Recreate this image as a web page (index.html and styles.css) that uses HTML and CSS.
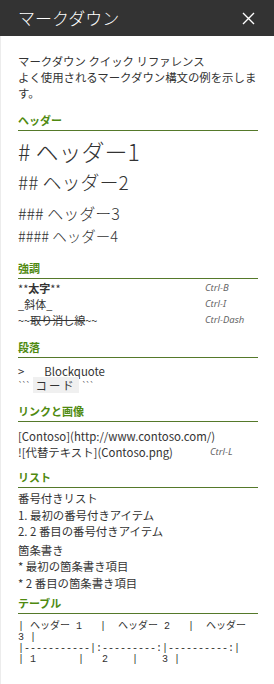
FILE: index.html
```html
<!DOCTYPE html>
<html lang="ja">
<head>
  <meta charset="UTF-8">
  <title>マークダウン</title>
  <link rel="stylesheet" href="styles.css">
</head>
<body>

  <div class="panel">
    <!-- Title bar -->
    <div class="panel-head">
      <h1>マークダウン</h1>
      <button class="close" aria-label="閉じる">
        <svg width="13" height="13" viewBox="0 0 13 13">
          <path d="M1 1 L12 12 M12 1 L1 12" stroke="#fff" stroke-width="1.4" fill="none"/>
        </svg>
      </button>
    </div>

    <div class="panel-body">
      <p class="intro">マークダウン クイック リファレンス<br>よく使用されるマークダウン構文の例を示します。</p>

      <!-- Headers -->
      <h2 class="group-title">ヘッダー</h2>
      <div class="headers">
        <div class="h1">#&nbsp;ヘッダー1</div>
        <div class="h2">##&nbsp;ヘッダー2</div>
        <div class="h3">###&nbsp;ヘッダー3</div>
        <div class="h4">####&nbsp;ヘッダー4</div>
      </div>

      <!-- Emphasis -->
      <h2 class="group-title">強調</h2>
      <ul class="rows emphasis">
        <li><span class="src">**<b>太字</b>**</span><i>Ctrl-B</i></li>
        <li><span class="src">_斜体_</span><i>Ctrl-I</i></li>
        <li><span class="src">~~<s>取り消し線</s>~~</span><i>Ctrl-Dash</i></li>
      </ul>

      <!-- Paragraph -->
      <h2 class="group-title">段落</h2>
      <div class="para">
        <div class="quote">&gt;<span>Blockquote</span></div>
        <div class="code"><span class="tick">```</span><code>コード</code><span class="tick">```</span></div>
      </div>

      <!-- Links and images -->
      <h2 class="group-title">リンクと画像</h2>
      <ul class="rows links">
        <li><span class="src">[Contoso](http://www.contoso.com/)</span></li>
        <li><span class="src">![代替テキスト](Contoso.png)</span><i>Ctrl-L</i></li>
      </ul>

      <!-- Lists -->
      <h2 class="group-title">リスト</h2>
      <div class="lists">
        <p>番号付きリスト<br>1. 最初の番号付きアイテム<br>2. 2 番目の番号付きアイテム</p>
        <p>箇条書き<br>* 最初の箇条書き項目<br>* 2 番目の箇条書き項目</p>
      </div>

      <!-- Table -->
      <h2 class="group-title">テーブル</h2>
      <pre class="table">| ヘッダー 1   |  ヘッダー 2   |  ヘッダー 3 |
|-----------|:---------:|----------:|
| 1       |   2    |    3 |</pre>
    </div>
  </div>

</body>
</html>
```

FILE: styles.css
```css
body {
  margin: 0;
  font-family: "Noto Sans CJK JP", "Noto Sans", sans-serif;
  color: #333;
  background-color: #fff;
}

.panel {
  width: 274px;
  height: 684px;
  overflow: hidden;
}

.panel-head {
  height: 36px;
  background-color: #333;
  display: flex;
  align-items: center;
  justify-content: space-between;
  padding: 0 18px 0 18px;
}

.panel-head h1 {
  margin: 0;
  font-size: 17px;
  font-weight: 300;
  color: #fff;
  line-height: 36px;
}

.close {
  background: none;
  border: none;
  padding: 0;
  width: 13px;
  height: 13px;
  display: flex;
  margin-right: 1px;
  cursor: pointer;
}

.panel-body {
  border-left: 1px solid #ececec;
  padding: 0 16px 0 17px;
  height: 648px;
  font-size: 11.4px;
}

.intro {
  margin: 0;
  padding-top: 17px;
  line-height: 16px;
}

.group-title {
  margin: 12px 0 0;
  font-size: 11px;
  font-weight: bold;
  line-height: 14px;
  color: #4f8a10;
  padding-bottom: 3px;
  border-bottom: 1px solid #55792a;
}

.headers {
  padding-top: 6px;
  font-weight: 300;
  color: #333;
}

.headers .h1 { font-size: 23px; line-height: 28px; }
.headers .h2 { font-size: 19px; line-height: 34px; }
.headers .h3 { font-size: 16px; line-height: 28px; }
.headers .h4 { font-size: 14.5px; line-height: 18px; }

.headers + .group-title {
  margin-top: 16px;
}

.rows {
  list-style-type: none;
  margin: 0;
  padding: 0;
}

.rows li {
  display: flex;
  line-height: 16px;
  white-space: nowrap;
}

.rows li .src {
  flex: none;
  width: 187px;
}

.rows li i {
  font-size: 9.5px;
  color: #666;
  font-family: "Noto Sans", sans-serif;
}

.emphasis {
  padding-top: 1px;
  font-size: 11px;
}

.emphasis b {
  font-weight: bold;
}

.para {
  padding-top: 6px;
  line-height: 14px;
}

.quote span {
  margin-left: 20px;
}

.tick {
  font-size: 8px;
  vertical-align: top;
  letter-spacing: -1px;
}

.code code {
  font-family: inherit;
  background-color: #f0f0f0;
  padding: 0 3px;
  margin: 0 3px;
  letter-spacing: 2px;
}

.links {
  padding-top: 6px;
  line-height: 15px;
}

.links li .src {
  width: 192px;
}

.links + .group-title {
  margin-top: 10px;
}

.lists {
  padding-top: 2px;
  line-height: 16.5px;
}

.lists p {
  margin: 0 0 2px;
}

.lists + .group-title {
  margin-top: 5px;
}

.table {
  margin: 7px 0 0;
  font-family: "Liberation Mono", "Noto Sans Mono CJK JP", "Noto Sans CJK JP", monospace;
  font-size: 10px;
  line-height: 11px;
  white-space: pre-wrap;
  color: #333;
}
```
